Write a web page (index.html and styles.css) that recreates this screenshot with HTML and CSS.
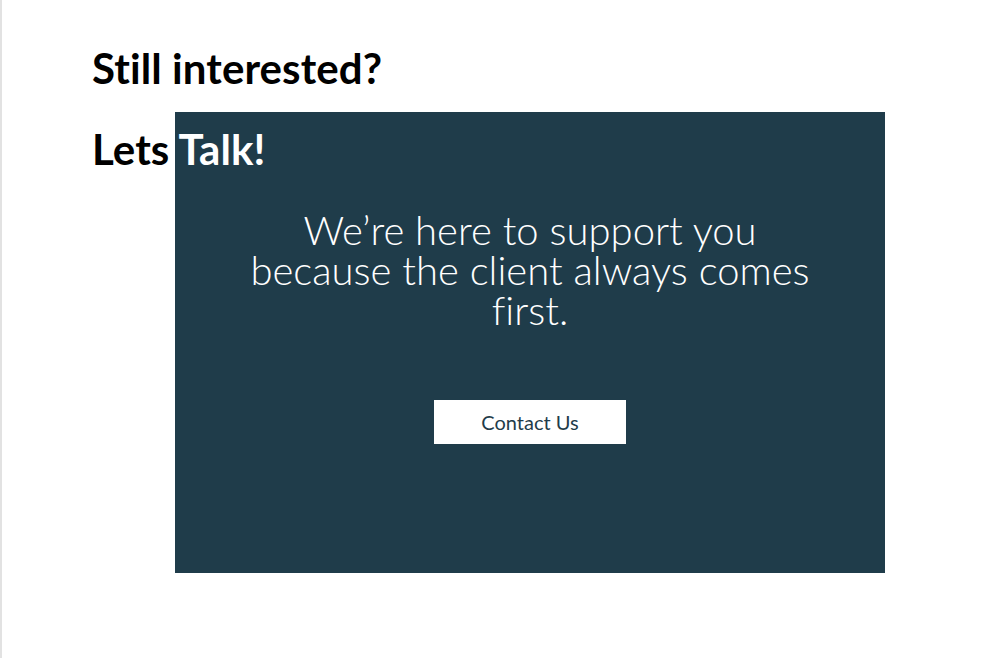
FILE: index.html
```html
<!DOCTYPE html>
<html lang="en">
<head>
<meta charset="utf-8">
<title>Still interested? Lets Talk!</title>
<link rel="stylesheet" href="styles.css">
</head>
<body>
<main class="page">
  <div class="heads">
    <h2 class="headline">Still interested?</h2>
    <h2 class="headline">Lets <span class="on-dark">Talk!</span></h2>
  </div>
  <section class="card">
    <p class="lead">We’re here to support you because the client always comes first.</p>
    <a class="btn" href="#">Contact Us</a>
  </section>
</main>
</body>
</html>
```
FILE: styles.css
```css
html, body {
  margin: 0;
  padding: 0;
  background: #ffffff;
}
body {
  border-left: 2px solid #e2e2e2;
  min-height: 100vh;
  box-sizing: border-box;
  font-family: "Lato", "Open Sans", sans-serif;
  font-variant-ligatures: none;
}
.page {
  padding: 28px 0 0 90px;
}
.heads {
  position: relative;
  z-index: 1;
}
.headline {
  margin: 0;
  font-size: 42px;
  line-height: 81px;
  font-weight: 700;
  color: #000;
  letter-spacing: 0.1px;
}
.on-dark {
  color: #ffffff;
}
.card {
  margin: -78px 0 0 83px;
  width: 710px;
  height: 461px;
  background: #1f3c4a;
  box-sizing: border-box;
  padding-top: 98px;
  display: flex;
  flex-direction: column;
  align-items: center;
}
.lead {
  margin: 0;
  width: 580px;
  text-align: center;
  color: #fff;
  font-weight: 300;
  font-size: 40px;
  line-height: 40px;
}
.btn {
  margin-top: 70px;
  width: 192px;
  height: 44px;
  background: #fff;
  color: #1f3c4a;
  font-size: 20px;
  display: flex;
  align-items: center;
  justify-content: center;
  text-decoration: none;
}
```
